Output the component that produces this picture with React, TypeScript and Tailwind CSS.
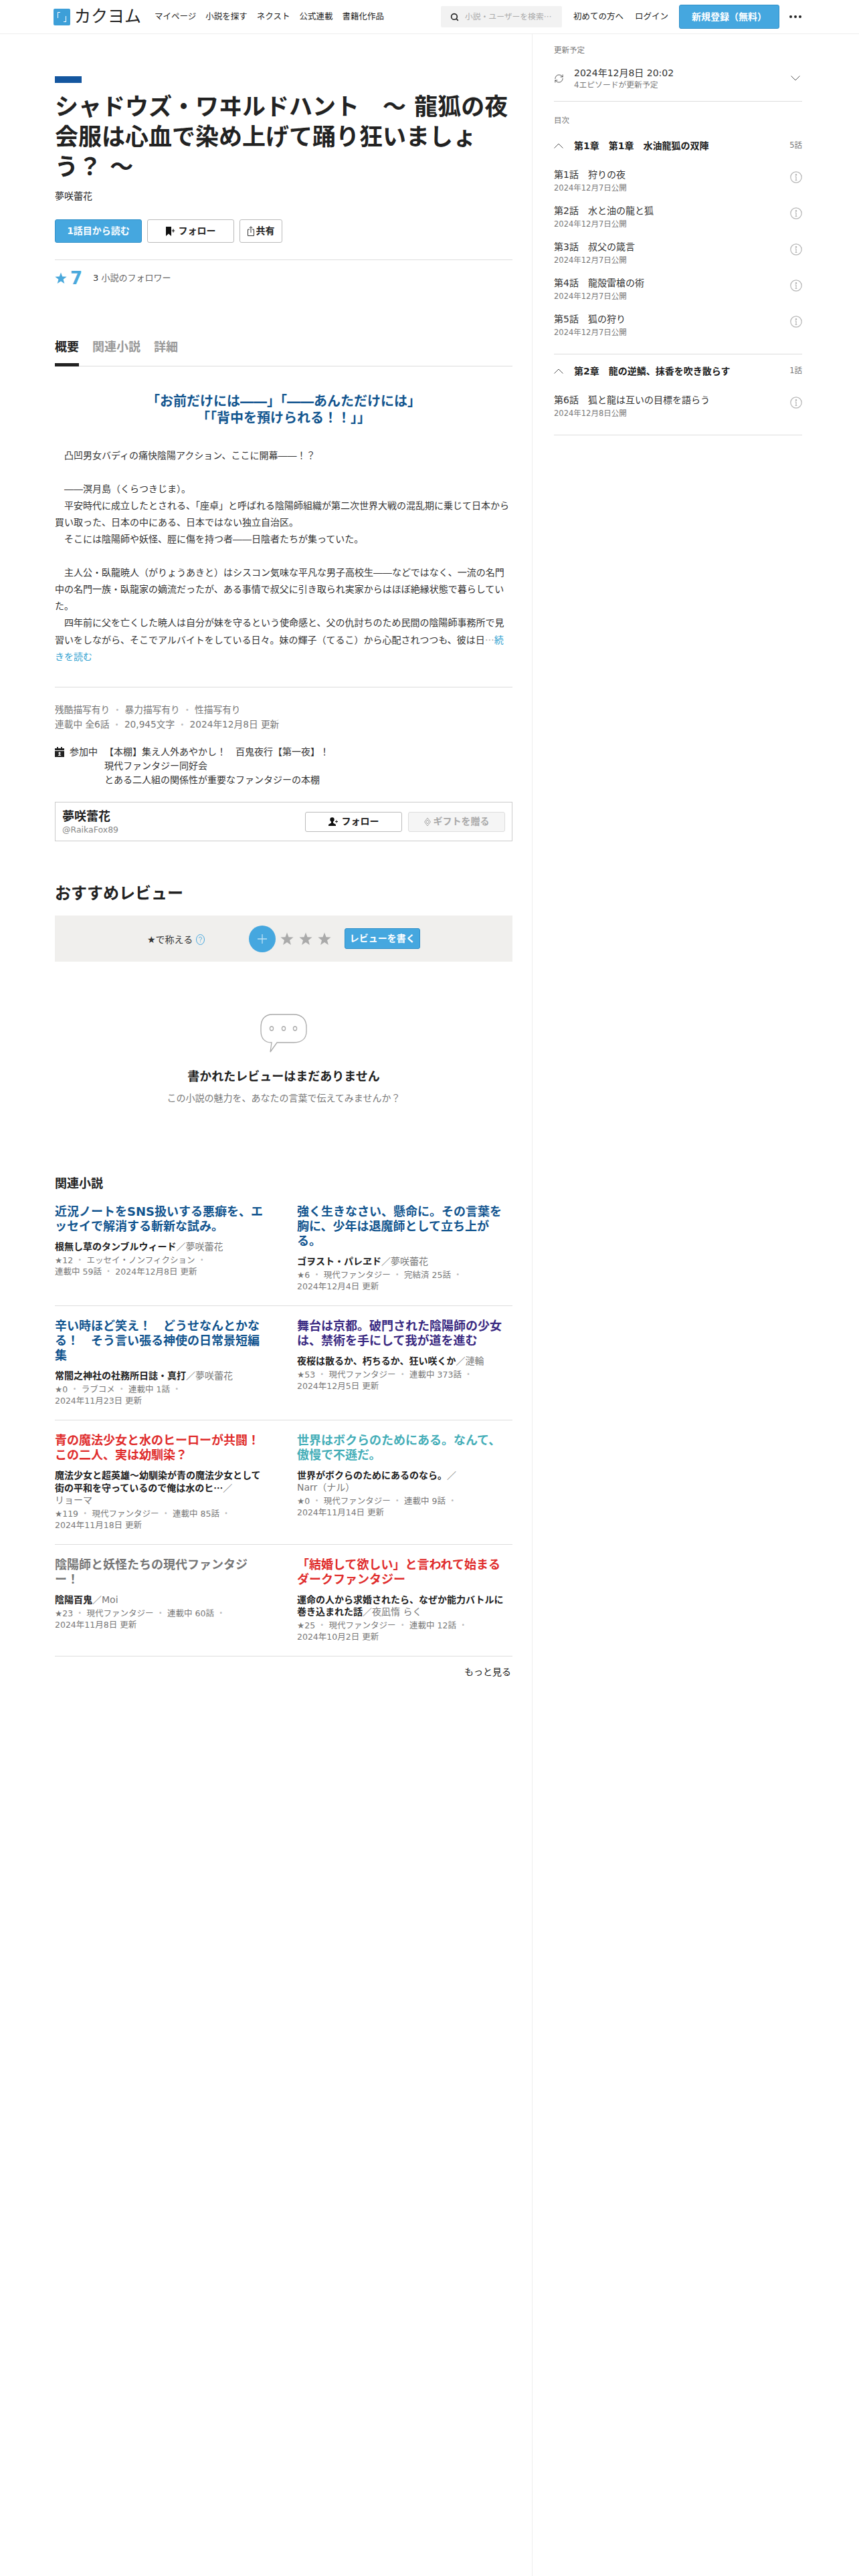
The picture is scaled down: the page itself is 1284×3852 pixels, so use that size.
import React from "react";
import { Search, RefreshCw } from "lucide-react";

const Dot = () => <span className="text-[#bbb]"> ・ </span>;

function Chevron({ up }: { up?: boolean }) {
  return (
    <svg width="14" height="8" viewBox="0 0 14 8" fill="none" stroke="#555" strokeWidth="1">
      <path d={up ? "M0.5 7.5 L7 1 L13.5 7.5" : "M0.5 0.5 L7 7 L13.5 0.5"} />
    </svg>
  );
}

function Info() {
  return (
    <svg width="18" height="18" viewBox="0 0 18 18" fill="none" stroke="#b5b5b5" strokeWidth="1.2">
      <circle cx="9" cy="9" r="8.2" />
      <path d="M9 8 V13.5 M7.6 8 H9 M7.6 13.5 H10.4" />
      <circle cx="9" cy="5.4" r="0.7" fill="#b5b5b5" />
    </svg>
  );
}

function Star({ className }: { className: string }) {
  return (
    <svg viewBox="0 0 20 20" className={className}>
      <path d="M10 0.6 L12.5 7.2 L19.6 7.5 L14 12 L15.9 19 L10 15 L4.1 19 L6 12 L0.4 7.5 L7.5 7.2 Z" />
    </svg>
  );
}

function Episode({ title, date }: { title: string; date: string }) {
  return (
    <div className="flex h-[54px] justify-between">
      <div>
        <div className="text-[14px] leading-[20px] text-[#333]">{title}</div>
        <div className="mt-[2px] text-[11.5px] leading-[16px] text-[#777]">{date}</div>
      </div>
      <div className="mt-[5px]">
        <Info />
      </div>
    </div>
  );
}

function ChapterHead({ title, count }: { title: string; count: string }) {
  return (
    <div className="flex h-[20px] items-center">
      <div className="flex w-[30px] items-center">
        <Chevron up />
      </div>
      <div className="flex-1 text-[14px] font-bold leading-[20px] text-[#222]">{title}</div>
      <div className="text-[11.5px] text-[#777]">{count}</div>
    </div>
  );
}

type Novel = {
  title: string;
  color: string;
  work: React.ReactNode;
  author: string;
  meta: string[];
};

function NovelCell({ n }: { n: Novel }) {
  return (
    <div>
      <div className={`text-[18px] font-bold leading-[22px] ${n.color}`}>{n.title}</div>
      <div className="mt-[10px] pr-[2px] text-[14px] leading-[18px] text-[#777]">
        <span className="font-bold text-[#222]">{n.work}</span>／<span className="inline-block whitespace-nowrap">{n.author}</span>
      </div>
      <div className="mt-[4px] pr-[6px] text-[12.5px] leading-[16.5px] text-[#777]">
        {n.meta.map((m, i) => (
          <span key={i} className="inline-block whitespace-pre">
            {m}
            {i < n.meta.length - 1 ? <Dot /> : null}
          </span>
        ))}
      </div>
    </div>
  );
}

const Ell = () => <span className="font-['Noto_Sans_CJK_JP',sans-serif]">…</span>;

const rows: Novel[][] = [
  [
    {
      title: "近況ノートをSNS扱いする悪癖を、エッセイで解消する斬新な試み。",
      color: "text-[#12558f]",
      work: "根無し草のタンブルウィード",
      author: "夢咲蕾花",
      meta: ["★12", "エッセイ・ノンフィクション", "連載中 59話", "2024年12月8日 更新"],
    },
    {
      title: "強く生きなさい、懸命に。その言葉を胸に、少年は退魔師として立ち上がる。",
      color: "text-[#12558f]",
      work: "ゴヲスト・パレヱド",
      author: "夢咲蕾花",
      meta: ["★6", "現代ファンタジー", "完結済 25話", "2024年12月4日 更新"],
    },
  ],
  [
    {
      title: "辛い時ほど笑え！　どうせなんとかなる！　そう言い張る神使の日常景短編集",
      color: "text-[#12558f]",
      work: "常闇之神社の社務所日誌・真打",
      author: "夢咲蕾花",
      meta: ["★0", "ラブコメ", "連載中 1話", "2024年11月23日 更新"],
    },
    {
      title: "舞台は京都。破門された陰陽師の少女は、禁術を手にして我が道を進む",
      color: "text-[#3a2a82]",
      work: "夜桜は散るか、朽ちるか、狂い咲くか",
      author: "漣輪",
      meta: ["★53", "現代ファンタジー", "連載中 373話", "2024年12月5日 更新"],
    },
  ],
  [
    {
      title: "青の魔法少女と水のヒーローが共闘！この二人、実は幼馴染？",
      color: "text-[#e02d2d]",
      work: (
        <>
          魔法少女と超英雄～幼馴染が青の魔法少女として街の平和を守っているので俺は水のヒ
          <Ell />
        </>
      ),
      author: "リョーマ",
      meta: ["★119", "現代ファンタジー", "連載中 85話", "2024年11月18日 更新"],
    },
    {
      title: "世界はボクらのためにある。なんて、傲慢で不遜だ。",
      color: "text-[#45aeb8]",
      work: "世界がボクらのためにあるのなら。",
      author: "Narr（ナル）",
      meta: ["★0", "現代ファンタジー", "連載中 9話", "2024年11月14日 更新"],
    },
  ],
  [
    {
      title: "陰陽師と妖怪たちの現代ファンタジー！",
      color: "text-[#777777]",
      work: "陰陽百鬼",
      author: "Moi",
      meta: ["★23", "現代ファンタジー", "連載中 60話", "2024年11月8日 更新"],
    },
    {
      title: "「結婚して欲しい」と言われて始まるダークファンタジー",
      color: "text-[#e02d2d]",
      work: "運命の人から求婚されたら、なぜか能力バトルに巻き込まれた話",
      author: "夜凪惰 らく",
      meta: ["★25", "現代ファンタジー", "連載中 12話", "2024年10月2日 更新"],
    },
  ],
];

export default function App() {
  return (
    <div className="min-h-[3852px] bg-white font-['DejaVu_Sans','Noto_Sans_CJK_JP',sans-serif] text-[#222]">
      {/* header */}
      <header className="flex h-[51px] items-center justify-between border-b border-[#eee] pl-[80px] pr-[86px]">
        <div className="flex items-center">
          <div className="flex h-[25px] w-[25px] items-center justify-center gap-[5px] rounded-[2px] bg-[#3d9fd8]">
            <span className="mb-[6px] h-[9px] w-[4px] border-l-[1.5px] border-t-[1.5px] border-white" />
            <span className="mt-[6px] h-[9px] w-[4px] border-b-[1.5px] border-r-[1.5px] border-white" />
          </div>
          <span className="ml-[6px] w-[120px] text-[25px] leading-[30px] text-[#222]">カクヨム</span>
          <nav className="flex gap-[14px] text-[12.5px] leading-[20px] text-[#222]">
            <span>マイページ</span>
            <span>小説を探す</span>
            <span>ネクスト</span>
            <span>公式連載</span>
            <span>書籍化作品</span>
          </nav>
        </div>
        <div className="flex items-center">
          <div className="flex h-[32px] w-[181px] items-center rounded-[2px] bg-[#f2f2f2] pl-[14px]">
            <Search size={13} strokeWidth={3} color="#222" />
            <span className="ml-[9px] text-[11.8px] text-[#aaa]">
              小説・ユーザーを検索
              <Ell />
            </span>
          </div>
          <span className="ml-[17px] text-[12.5px] text-[#222]">初めての方へ</span>
          <span className="ml-[17px] text-[12.5px] text-[#222]">ログイン</span>
          <div className="ml-[16px] flex h-[36px] w-[150px] items-center justify-center rounded-[3px] border border-[#2f8fc8] bg-[#45a7df] text-[14px] font-bold text-white">
            新規登録（無料）
          </div>
          <div className="ml-[15px] flex gap-[3px]">
            <span className="h-[4px] w-[4px] rounded-full bg-[#222]" />
            <span className="h-[4px] w-[4px] rounded-full bg-[#222]" />
            <span className="h-[4px] w-[4px] rounded-full bg-[#222]" />
          </div>
        </div>
      </header>

      <div className="flex">
        {/* main */}
        <main className="w-[795px] pl-[82px] pr-[29px]">
          <div className="mt-[63px] h-[10px] w-[40px] bg-[#14569f]" />
          <h1 className="mt-[14px] text-[35px] font-bold leading-[45px] text-[#222]">
            シャドウズ・ワヰルドハント　～ 龍狐の夜会服は心血で染め上げて踊り狂いましょう？ ～
          </h1>
          <div className="mt-[10px] text-[14px] leading-[20px] text-[#222]">夢咲蕾花</div>

          <div className="mt-[25px] flex gap-[8px]">
            <div className="flex h-[35px] w-[130px] items-center justify-center rounded-[3px] border border-[#2f8fc8] bg-[#45a7df] text-[14px] font-bold text-white">
              1話目から読む
            </div>
            <div className="flex h-[35px] w-[130px] items-center justify-center gap-[5px] rounded-[3px] border border-[#bbb] bg-white text-[14px] font-bold text-[#222]">
              <svg width="14" height="14" viewBox="0 0 14 14" fill="#111">
                <path d="M0 0 H8 V14 L4 10.5 L0 14 Z" />
                <path d="M11 3.5 V8.5 M8.8 6 H13.2" stroke="#111" strokeWidth="1.2" />
              </svg>
              フォロー
            </div>
            <div className="flex h-[35px] w-[64px] items-center justify-center gap-[3px] rounded-[3px] border border-[#bbb] bg-white text-[14px] font-bold text-[#222]">
              <svg width="10" height="15" viewBox="0 0 10 15" fill="none" stroke="#333" strokeWidth="1">
                <path d="M3 5 H0.5 V14.5 H9.5 V5 H7 M5 10 V1 M2.8 3 L5 0.8 L7.2 3" />
              </svg>
              共有
            </div>
          </div>

          <div className="mt-[25px] border-t border-[#ddd]" />

          <div className="mt-[14px] flex h-[26px] items-center">
            <Star className="h-[18px] w-[18px] fill-[#4ba9dc]" />
            <span className="ml-[5px] text-[26px] font-bold leading-[26px] text-[#4ba9dc]">7</span>
            <span className="ml-[16px] text-[13px] text-[#666]">
              <span className="text-[#333]">3</span> 小説のフォロワー
            </span>
          </div>

          {/* tabs */}
          <div className="mt-[71px] flex h-[48px] gap-[20px] border-b border-[#ddd] text-[18px] font-bold">
            <div className="relative pt-[6px] leading-[26px] text-[#222]">
              概要
              <span className="absolute bottom-[-1px] left-0 h-[5px] w-full bg-[#222]" />
            </div>
            <div className="pt-[6px] leading-[26px] text-[#999]">関連小説</div>
            <div className="pt-[6px] leading-[26px] text-[#999]">詳細</div>
          </div>

          <div className="mt-[40px] text-center text-[20px] font-bold leading-[24.5px] text-[#12558f]">
            「お前だけには――」「――あんただけには」
            <br />
            「「背中を預けられる！！」」
          </div>

          <div className="mt-[32px] text-[14px] leading-[25px] text-[#333]">
            <p>{"　凸凹男女バディの痛快陰陽アクション、ここに開幕――！？"}</p>
            <p>&nbsp;</p>
            <p>{"　――溟月島（くらつきじま）。"}</p>
            <p>{"　平安時代に成立したとされる、「座卓」と呼ばれる陰陽師組織が第二次世界大戦の混乱期に乗じて日本から買い取った、日本の中にある、日本ではない独立自治区。"}</p>
            <p>{"　そこには陰陽師や妖怪、脛に傷を持つ者――日陰者たちが集っていた。"}</p>
            <p>&nbsp;</p>
            <p>{"　主人公・臥龍暁人（がりょうあきと）はシスコン気味な平凡な男子高校生――などではなく、一流の名門中の名門一族・臥龍家の嫡流だったが、ある事情で叔父に引き取られ実家からはほぼ絶縁状態で暮らしていた。"}</p>
            <p>
              {"　四年前に父を亡くした暁人は自分が妹を守るという使命感と、父の仇討ちのため民間の陰陽師事務所で見習いをしながら、そこでアルバイトをしている日々。妹の輝子（てるこ）から心配されつつも、彼は日"}
              <span className="text-[#999]"><Ell /></span>
              <span className="text-[#2f9fd0]">続きを読む</span>
            </p>
          </div>

          <div className="mt-[32px] border-t border-[#ddd]" />

          <div className="mt-[22px] text-[13.7px] leading-[22px] text-[#777]">
            <div>残酷描写有り<Dot />暴力描写有り<Dot />性描写有り</div>
            <div>連載中 全6話<Dot />20,945文字<Dot />2024年12月8日 更新</div>
          </div>

          <div className="mt-[20px] flex text-[14px] leading-[21px] text-[#333]">
            <div className="flex w-[22px] pt-[3px]">
              <svg width="14" height="15" viewBox="0 0 14 15" fill="#222">
                <path d="M0 2 H14 V5 H0 Z M0 6 H14 V15 H0 Z M3 0 H5 V2 H3 Z M9 0 H11 V2 H9 Z" />
                <circle cx="7" cy="9" r="1.6" fill="#fff" />
                <path d="M4.5 13 L7 10.5 L9.5 13 Z" fill="#fff" />
              </svg>
            </div>
            <div className="w-[52px]">参加中</div>
            <div>
              <div>【本棚】集え人外あやかし！　百鬼夜行【第一夜】！</div>
              <div>現代ファンタジー同好会</div>
              <div>とある二人組の関係性が重要なファンタジーの本棚</div>
            </div>
          </div>

          {/* author card */}
          <div className="mt-[22px] flex h-[59px] items-center justify-between border border-[#ccc] pl-[10px] pr-[10px]">
            <div>
              <div className="text-[18px] font-bold leading-[24px] text-[#222]">夢咲蕾花</div>
              <div className="text-[12.5px] leading-[15px] text-[#888]">@RaikaFox89</div>
            </div>
            <div className="flex gap-[9px]">
              <div className="flex h-[30px] w-[145px] items-center justify-center gap-[5px] rounded-[3px] border border-[#bbb] bg-white text-[14px] font-bold text-[#222]">
                <svg width="15" height="13" viewBox="0 0 15 13" fill="#111">
                  <circle cx="5.5" cy="3.5" r="3.2" />
                  <path d="M4 6 H7 V8.5 L11 11 V13 H0 V11 L4 8.5 Z" />
                  <path d="M12 4.5 V8.5 M10 6.5 H14" stroke="#111" strokeWidth="1" />
                </svg>
                フォロー
              </div>
              <div className="flex h-[30px] w-[145px] items-center justify-center gap-[4px] rounded-[3px] border border-[#ddd] bg-[#f5f5f5] text-[14px] font-bold text-[#aaa]">
                <svg width="10" height="14" viewBox="0 0 10 14" fill="none" stroke="#aaa" strokeWidth="1">
                  <path d="M5 1 L9.5 7 L5 13 L0.5 7 Z M5 4 L7.3 7 L5 10 L2.7 7 Z" />
                </svg>
                ギフトを贈る
              </div>
            </div>
          </div>

          {/* reviews */}
          <h2 className="mt-[62px] text-[24px] font-bold leading-[32px] text-[#222]">おすすめレビュー</h2>
          <div className="mt-[17px] flex h-[69px] items-center bg-[#f0efed] pl-[138px]">
            <span className="mt-[4px] text-[14px] text-[#333]">★で称える</span>
            <svg className="ml-[5px] mt-[2px]" width="13" height="16" viewBox="0 0 13 16" fill="none" stroke="#45a7df" strokeWidth="1">
              <ellipse cx="6.5" cy="8" rx="6" ry="7.5" />
              <path d="M4.5 6 C4.5 3.5 8.5 3.5 8.5 6 C8.5 7.6 6.5 7.6 6.5 9.6 M6.5 11 V12" />
            </svg>
            <div className="ml-[66px] flex h-[40px] w-[40px] items-center justify-center rounded-full bg-[#45a7df]">
              <svg width="16" height="16" viewBox="0 0 16 16" stroke="#bfe2f5" strokeWidth="1.3">
                <path d="M8 1 V15 M1 8 H15" />
              </svg>
            </div>
            <div className="ml-[7px] flex gap-[8px]">
              <Star className="h-[20px] w-[20px] fill-[#aaa]" />
              <Star className="h-[20px] w-[20px] fill-[#aaa]" />
              <Star className="h-[20px] w-[20px] fill-[#aaa]" />
            </div>
            <div className="ml-[20px] flex h-[31px] w-[113px] items-center justify-center rounded-[3px] border border-[#2f8fc8] bg-[#45a7df] text-[14px] font-bold text-white">
              レビューを書く
            </div>
          </div>

          <div className="mt-[78px] flex flex-col items-center">
            <svg width="70" height="58" viewBox="0 0 70 58" fill="none" stroke="#aaa" strokeWidth="1.3">
              <path d="M18 1 H50 C62 1 69 8 69 20 V26 C69 37 62 43 50 43 H25 L15 57 L17 43 C7 43 1 37 1 26 V20 C1 8 7 1 18 1 Z" />
              <ellipse cx="17" cy="22" rx="2.6" ry="3" />
              <ellipse cx="35" cy="22" rx="2.6" ry="3" />
              <ellipse cx="52" cy="22" rx="2.6" ry="3" />
            </svg>
            <div className="mt-[23px] text-[18px] font-bold leading-[26px] text-[#222]">書かれたレビューはまだありません</div>
            <div className="mt-[9px] text-[14px] leading-[20px] text-[#777]">この小説の魅力を、あなたの言葉で伝えてみませんか？</div>
          </div>

          {/* related */}
          <h2 className="mt-[106px] text-[18px] font-bold leading-[24px] text-[#222]">関連小説</h2>
          <div>
            {rows.map((r, i) => (
              <div key={i} className="grid grid-cols-2 gap-x-[40px] border-b border-[#ddd] pb-[20px] pt-[19px]">
                <NovelCell n={r[0]} />
                <NovelCell n={r[1]} />
              </div>
            ))}
          </div>
          <div className="mt-[13px] pr-[2px] text-right text-[14px] leading-[20px] text-[#222]">もっと見る</div>
        </main>

        {/* side */}
        <aside className="min-h-[3801px] w-[489px] border-l border-[#eee] pl-[32px] pr-[85px]">
          <div className="pt-[16px] text-[11.5px] leading-[16px] text-[#777]">更新予定</div>
          <div className="mt-[16px] flex items-center border-b border-[#ddd] pb-[16px]">
            <div className="w-[30px]">
              <RefreshCw size={15} strokeWidth={1.3} color="#333" />
            </div>
            <div className="flex-1">
              <div className="text-[14px] leading-[20px] text-[#333]">2024年12月8日 20:02</div>
              <div className="text-[11.8px] leading-[16px] text-[#777]">4エピソードが更新予定</div>
            </div>
            <div className="pr-[3px]">
              <Chevron />
            </div>
          </div>

          <div className="mt-[20px] text-[11.5px] leading-[16px] text-[#777]">目次</div>
          <div className="mt-[20px]">
            <ChapterHead title="第1章　第1章　水油龍狐の双陣" count="5話" />
          </div>
          <div className="mt-[23px] border-b border-[#ddd] pb-[8px]">
            <Episode title="第1話　狩りの夜" date="2024年12月7日公開" />
            <Episode title="第2話　水と油の龍と狐" date="2024年12月7日公開" />
            <Episode title="第3話　叔父の箴言" date="2024年12月7日公開" />
            <Episode title="第4話　龍殻雷槍の術" date="2024年12月7日公開" />
            <Episode title="第5話　狐の狩り" date="2024年12月7日公開" />
          </div>
          <div className="mt-[15px]">
            <ChapterHead title="第2章　龍の逆鱗、抹香を吹き散らす" count="1話" />
          </div>
          <div className="mt-[23px] border-b border-[#ddd] pb-[8px]">
            <Episode title="第6話　狐と龍は互いの目標を語らう" date="2024年12月8日公開" />
          </div>
        </aside>
      </div>
    </div>
  );
}
